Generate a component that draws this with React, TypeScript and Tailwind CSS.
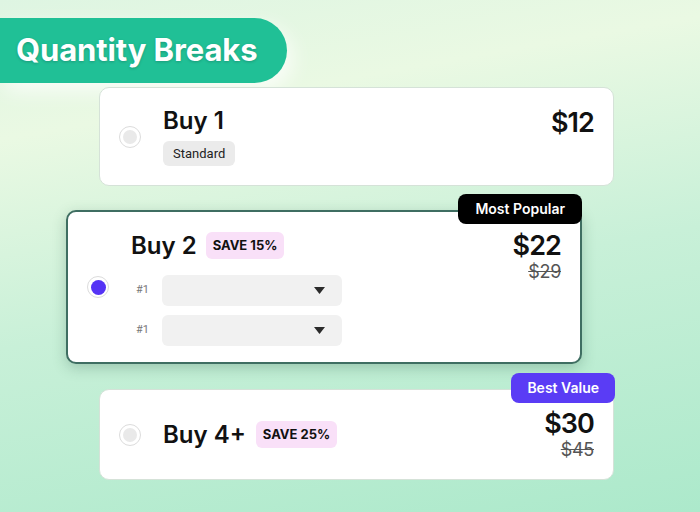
const font = { fontFamily: "Inter, 'Noto Sans', sans-serif" };

function Radio({ checked }: { checked?: boolean }) {
  return (
    <div className="size-[22px] shrink-0 rounded-full border border-[#dcdcdc] bg-white flex items-center justify-center">
      <div className={checked ? "size-[15px] rounded-full bg-[#5533f5]" : "size-[14px] rounded-full bg-[#e9e9e9]"} />
    </div>
  );
}

function Save({ label }: { label: string }) {
  return (
    <span className="rounded-md bg-[#f9e0f8] px-[7px] py-[6px] text-[13px] font-bold leading-[15px] text-[#111]">
      {label}
    </span>
  );
}

function Select() {
  return (
    <div className="flex items-center gap-[14px] pl-[5px]">
      <span className="w-[12px] text-[11px] text-[#777]" style={{ fontFamily: "Roboto, sans-serif" }}>
        #1
      </span>
      <div className="flex h-[31px] w-[180px] items-center justify-end rounded-md bg-[#f1f1f1] pr-[17px]">
        <svg width="11" height="7" viewBox="0 0 11 7">
          <path d="M0 0h11L5.5 7z" fill="#2b2b2b" />
        </svg>
      </div>
    </div>
  );
}

export default function App() {
  return (
    <div
      className="h-[512px] w-[700px] overflow-hidden bg-[linear-gradient(170deg,#def5e2_0%,#eaf9e3_22%,#c8f0d8_55%,#ace9cb_100%)] pt-[18px]"
      style={font}
    >
      {/* Header */}
      <div className="flex h-[65px] w-[287px] items-center rounded-r-[33px] bg-[#20c096] pl-[16px] shadow-[6px_8px_20px_rgba(255,255,255,0.75)]">
        <h1 className="text-[31px] font-bold tracking-[-0.1px] text-white [text-shadow:0_1px_3px_rgba(0,0,0,0.2)]">
          Quantity Breaks
        </h1>
      </div>

      {/* Buy 1 */}
      <div className="ml-[99px] mt-[4px] flex h-[99px] w-[515px] items-center rounded-[10px] border border-[#d5e2d8] bg-white pl-[19px] pr-[19px]">
        <Radio />
        <div className="ml-[22px] flex flex-1 flex-col items-start gap-[6px] self-center">
          <span className="text-[24px] font-semibold leading-[28px] text-[#111]">Buy 1</span>
          <span className="rounded-md bg-[#ebebeb] px-[10px] py-[3px] text-[13px] text-[#222]" style={{ fontFamily: "Roboto, sans-serif" }}>
            Standard
          </span>
        </div>
        <span className="self-start pt-[20px] text-[27px] font-semibold leading-[30px] tracking-[-0.9px] text-[#111]">$12</span>
      </div>

      {/* Buy 2 */}
      <div className="relative ml-[66px] mt-[24px] flex h-[154px] w-[516px] items-center rounded-[10px] border-2 border-[#3f6e62] bg-white pl-[19px] pr-[19px] shadow-[0_4px_14px_rgba(30,80,60,0.25)]">
        <span className="absolute -top-[18px] -right-[2px] rounded-lg bg-black px-[17px] py-[6px] text-[14px] font-semibold leading-[18px] text-white">
          Most Popular
        </span>
        <Radio checked />
        <div className="ml-[22px] flex flex-1 flex-col gap-[9px] pt-[3px]">
          <div className="mb-[6px] flex items-center gap-[9px]">
            <span className="text-[24px] font-semibold leading-[28px] text-[#111]">Buy 2</span>
            <Save label="SAVE 15%" />
          </div>
          <Select />
          <Select />
        </div>
        <div className="flex flex-col items-end self-start pt-[19px]">
          <span className="text-[27px] font-semibold leading-[30px] tracking-[-0.9px] text-[#111]">$22</span>
          <span className="text-[18px] leading-[22px] tracking-[-0.3px] text-[#555] line-through">$29</span>
        </div>
      </div>

      {/* Buy 4+ */}
      <div className="relative ml-[99px] mt-[25px] flex h-[91px] w-[515px] items-center rounded-[10px] border border-[#d5e2d8] bg-white pl-[19px] pr-[19px]">
        <span className="absolute -top-[17px] -right-[2px] rounded-lg bg-[#5a3cf5] px-[16px] py-[6px] text-[14px] font-semibold leading-[18px] text-white">
          Best Value
        </span>
        <Radio />
        <div className="ml-[22px] flex flex-1 items-center gap-[10px]">
          <span className="text-[24px] font-semibold leading-[28px] text-[#111]">Buy 4+</span>
          <Save label="SAVE 25%" />
        </div>
        <div className="flex flex-col items-end">
          <span className="text-[27px] font-semibold leading-[30px] tracking-[-0.9px] text-[#111]">$30</span>
          <span className="text-[18px] leading-[22px] tracking-[-0.3px] text-[#555] line-through">$45</span>
        </div>
      </div>
    </div>
  );
}
